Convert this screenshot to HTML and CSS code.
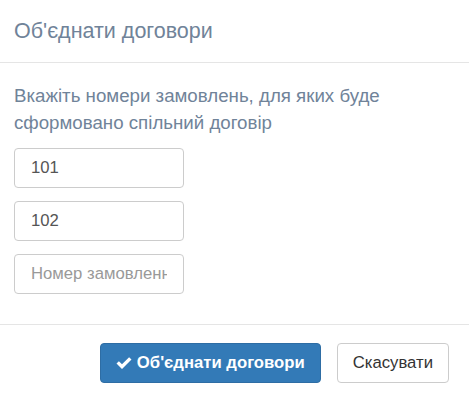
FILE: index.html
```html
<!DOCTYPE html>
<html lang="uk">
<head>
<meta charset="utf-8">
<link rel="stylesheet" href="styles.css">
</head>
<body>
<div class="modal">
  <div class="modal-header">
    <h4 class="modal-title">Об'єднати договори</h4>
  </div>
  <div class="modal-body">
    <p class="hint">Вкажіть номери замовлень, для яких буде сформовано спільний договір</p>
    <div class="fields">
      <input class="field" type="text" value="101">
      <input class="field" type="text" value="102">
      <input class="field" type="text" placeholder="Номер замовлення">
    </div>
  </div>
  <div class="modal-footer">
    <button class="btn btn-primary" type="button">
      <svg class="ok" viewBox="0 0 16 14" width="16" height="14" aria-hidden="true"><path d="M0.5 7.6 L2.9 5.2 L6 8.3 L13.1 1.2 L15.5 3.6 L6 13.1 Z" fill="#fff"/></svg>
      Об'єднати договори
    </button>
    <button class="btn btn-default" type="button">Скасувати</button>
  </div>
</div>
</body>
</html>
```

FILE: styles.css
```css
* { box-sizing: border-box; }
html, body { margin: 0; padding: 0; background: #fff; }
body {
  font-family: "Liberation Sans", Arial, sans-serif;
  color: #333;
}
.modal { width: 469px; }
.modal-header {
  padding: 15px 14px;
  border-bottom: 1px solid #e5e5e5;
}
.modal-title {
  margin: 0;
  font-size: 21.5px;
  line-height: 32px;
  font-weight: normal;
  color: #708399;
}
.modal-body {
  padding: 19px 14px 30px;
}
.hint {
  margin: 0 0 12px;
  font-size: 18.7px;
  line-height: 27px;
  color: #708399;
}
.fields {
  display: flex;
  flex-direction: column;
  gap: 13px;
}
.field {
  width: 170px;
  height: 40px;
  padding: 0 16px;
  border: 1px solid #ccc;
  border-radius: 4px;
  font-family: "Liberation Sans", Arial, sans-serif;
  font-size: 16.7px;
  color: #555;
  background: #fff;
  outline: none;
}
.field::placeholder { color: #999; }
.modal-footer {
  border-top: 1px solid #e5e5e5;
  padding: 18px 20px 20px;
  display: flex;
  justify-content: flex-end;
  gap: 16px;
}
.btn {
  height: 40px;
  padding: 0 15px;
  border-radius: 4px;
  font-family: "Liberation Sans", Arial, sans-serif;
  font-size: 16.7px;
  display: inline-flex;
  align-items: center;
  gap: 5px;
  cursor: pointer;
}
.btn-primary {
  background: #337ab7;
  border: 1px solid #2e6da4;
  color: #fff;
  font-weight: bold;
}
.btn-default {
  background: #fff;
  border: 1px solid #ccc;
  color: #333;
}
.ok { display: block; }
```
